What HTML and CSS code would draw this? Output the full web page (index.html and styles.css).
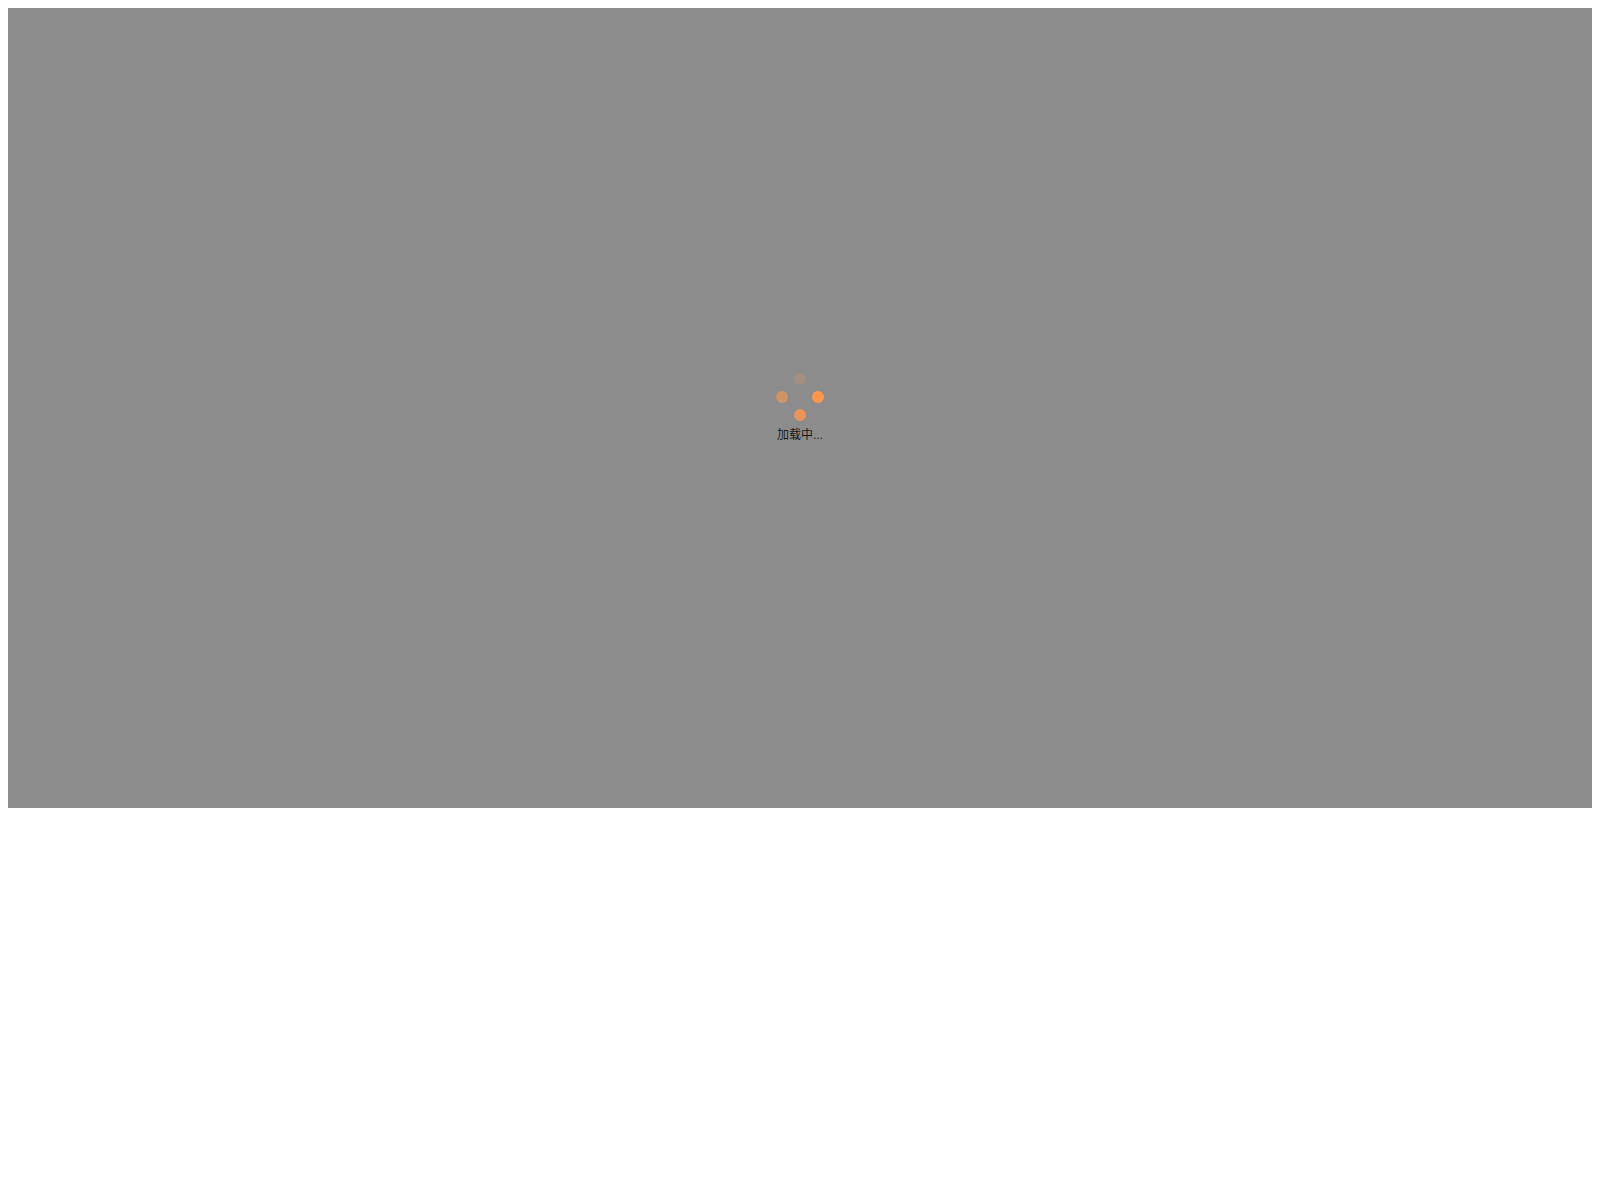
FILE: index.html
```html
<!DOCTYPE html>
<html lang="zh-CN">
<head>
<meta charset="UTF-8">
<meta name="viewport" content="width=device-width, initial-scale=1">
<title>加载中</title>
<link rel="stylesheet" href="styles.css">
</head>
<body>
<main class="loading-mask">
  <div class="loading" role="status">
    <svg class="spinner" viewBox="0 0 48 48" aria-hidden="true">
      <circle class="dot dot-faint" cx="24" cy="6" r="6"/>
      <circle class="dot" cx="42" cy="24" r="6"/>
      <circle class="dot dot-strong" cx="24" cy="42" r="6"/>
      <circle class="dot dot-medium" cx="6" cy="24" r="6"/>
    </svg>
    <span class="loading-text">加载中...</span>
  </div>
</main>
</body>
</html>
```

FILE: styles.css
```css
body {
  margin: 8px;
  background: #fff;
  font-family: "Liberation Sans", "Noto Sans CJK SC", sans-serif;
}

.loading-mask {
  display: flex;
  align-items: center;
  justify-content: center;
  min-height: 800px;
  background: #8c8c8c;
}

.loading {
  display: flex;
  flex-direction: column;
  align-items: center;
  gap: 6px;
}

.spinner {
  width: 48px;
  height: 48px;
}

.dot {
  fill: #ff964b;
}

.dot-strong {
  opacity: 0.8;
}

.dot-medium {
  opacity: 0.6;
}

.dot-faint {
  opacity: 0.2;
}

.loading-text {
  font-size: 12px;
  line-height: 16px;
  color: rgba(0, 0, 0, 0.85);
}
```
